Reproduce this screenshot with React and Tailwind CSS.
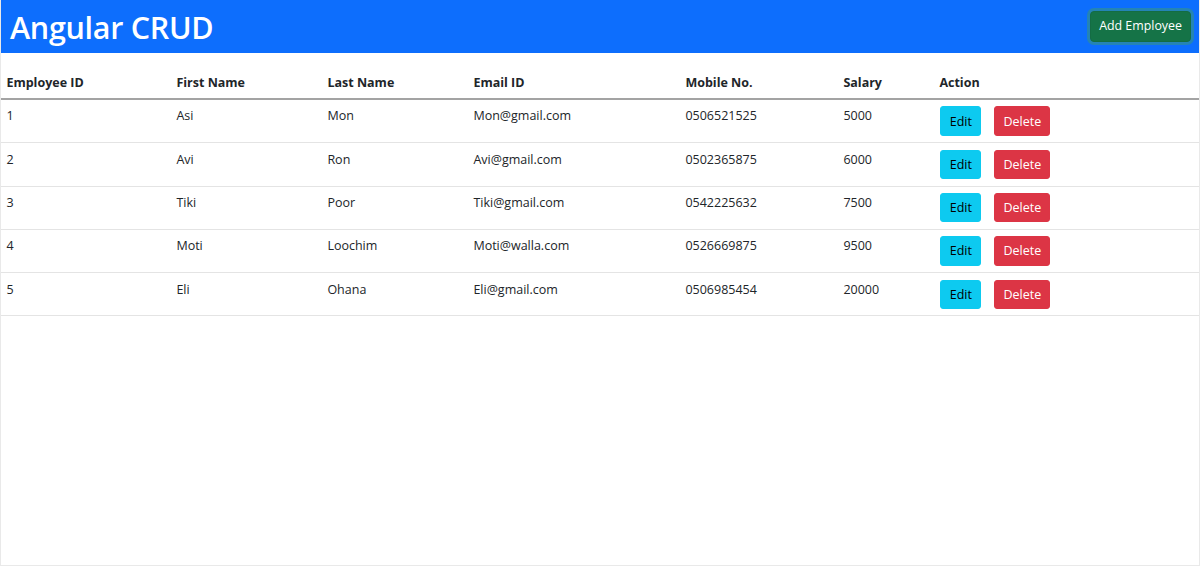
const employees = [
  { id: 1, first: 'Asi', last: 'Mon', email: 'Mon@gmail.com', mobile: '0506521525', salary: 5000 },
  { id: 2, first: 'Avi', last: 'Ron', email: 'Avi@gmail.com', mobile: '0502365875', salary: 6000 },
  { id: 3, first: 'Tiki', last: 'Poor', email: 'Tiki@gmail.com', mobile: '0542225632', salary: 7500 },
  { id: 4, first: 'Moti', last: 'Loochim', email: 'Moti@walla.com', mobile: '0526669875', salary: 9500 },
  { id: 5, first: 'Eli', last: 'Ohana', email: 'Eli@gmail.com', mobile: '0506985454', salary: 20000 },
];

const COLS = ['w-[170px]', 'w-[151px]', 'w-[146px]', 'w-[212px]', 'w-[158px]', 'w-[96px]', ''];

function App() {
  return (
    <div
      className="min-h-[566px] bg-white border-x border-b border-[#e9e9e9] text-[#212529]"
      style={{ fontFamily: '"Open Sans", "Noto Sans", sans-serif' }}>
      {/* HEADER */}
      <header className="h-[53px] bg-[#0d6efd] flex items-center justify-between pl-[9px] pr-[8px]">
        <h1 className="text-white text-[30.5px] leading-[38px] font-semibold tracking-[-0.3px]">Angular CRUD</h1>
        <button className="h-[31px] px-[8px] rounded-[4px] bg-[#157347] border border-[#146c43] text-white text-[12.4px] shadow-[0_0_0_3px_rgba(60,153,110,0.5)]">
          Add Employee
        </button>
      </header>

      {/* TABLE */}
      <table className="w-full mt-[14px] text-left text-[12.5px] leading-[19.2px] border-collapse">
        <thead>
          <tr className="border-b-2 border-[#a3a3a3]">
            {['Employee ID', 'First Name', 'Last Name', 'Email ID', 'Mobile No.', 'Salary', 'Action'].map((h, i) => (
              <th key={h} className={`${COLS[i]} pl-[5.4px] pr-[6.4px] pt-[6.4px] pb-[5.4px] font-bold align-top`}>
                {h}
              </th>
            ))}
          </tr>
        </thead>
        <tbody>
          {employees.map((e) => (
            <tr key={e.id} className="border-b border-[#e4e4e4]">
              <td className="pl-[5.4px] pr-[6.4px] py-[6.4px] align-top">{e.id}</td>
              <td className="pl-[5.4px] pr-[6.4px] py-[6.4px] align-top">{e.first}</td>
              <td className="pl-[5.4px] pr-[6.4px] py-[6.4px] align-top">{e.last}</td>
              <td className="pl-[5.4px] pr-[6.4px] py-[6.4px] align-top">{e.email}</td>
              <td className="pl-[5.4px] pr-[6.4px] py-[6.4px] align-top">{e.mobile}</td>
              <td className="pl-[5.4px] pr-[6.4px] py-[6.4px] align-top">{e.salary}</td>
              <td className="pl-[6.4px] pr-[6.4px] py-[6.4px] align-top">
                <div className="flex gap-[13px]">
                  <button className="h-[29.5px] w-[41px] rounded-[3px] bg-[#0dcaf0] border border-[#0dcaf0] text-black">
                    Edit
                  </button>
                  <button className="h-[29.5px] w-[56px] rounded-[3px] bg-[#dc3545] border border-[#dc3545] text-white">
                    Delete
                  </button>
                </div>
              </td>
            </tr>
          ))}
        </tbody>
      </table>
    </div>
  );
}

export default App;
